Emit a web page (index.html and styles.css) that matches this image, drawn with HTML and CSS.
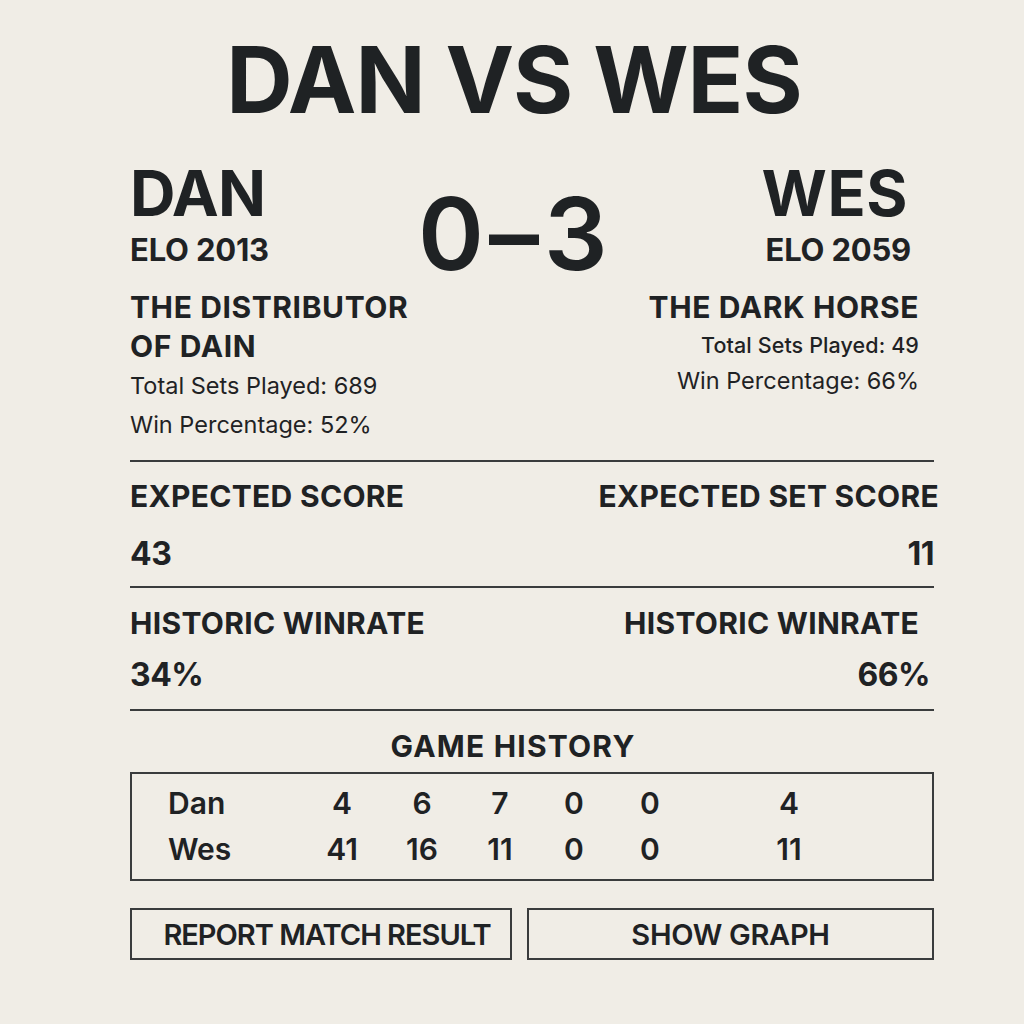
FILE: index.html
```html
<!DOCTYPE html>
<html lang="en">
<head>
<meta charset="utf-8">
<title>Dan vs Wes</title>
<link rel="stylesheet" href="styles.css">
</head>
<body>
<main class="card">
  <h1 class="title">DAN VS WES</h1>

  <section class="matchup">
    <div class="player">
      <div class="player-name">DAN</div>
      <div class="player-elo">ELO 2013</div>
    </div>
    <div class="score">0–3</div>
    <div class="player player-right">
      <div class="player-name player-name-right">WES</div>
      <div class="player-elo player-elo-right">ELO 2059</div>
    </div>
  </section>

  <section class="bios">
    <div class="bio">
      <h2 class="nickname">THE DISTRIBUTOR<br>OF DAIN</h2>
      <p class="stat">Total Sets Played: 689</p>
      <p class="stat">Win Percentage: 52%</p>
    </div>
    <div class="bio bio-right">
      <h2 class="nickname">THE DARK HORSE</h2>
      <p class="stat stat-tight stat-medium">Total Sets Played: 49</p>
      <p class="stat stat-tight">Win Percentage: 66%</p>
    </div>
  </section>

  <section class="metrics metrics-expected">
    <div class="metric">
      <div class="metric-label">EXPECTED SCORE</div>
      <div class="metric-value">43</div>
    </div>
    <div class="metric metric-right">
      <div class="metric-label label-out">EXPECTED SET SCORE</div>
      <div class="metric-value">11</div>
    </div>
  </section>

  <section class="metrics metrics-historic">
    <div class="metric">
      <div class="metric-label">HISTORIC WINRATE</div>
      <div class="metric-value">34%</div>
    </div>
    <div class="metric metric-right">
      <div class="metric-label label-in">HISTORIC WINRATE</div>
      <div class="metric-value value-in">66%</div>
    </div>
  </section>

  <section class="history">
    <h3 class="history-title">GAME HISTORY</h3>
    <div class="history-table">
      <div class="history-row">
        <span class="history-name">Dan</span>
        <span>4</span><span>6</span><span>7</span><span>0</span><span>0</span><span>4</span>
      </div>
      <div class="history-row">
        <span class="history-name">Wes</span>
        <span>41</span><span>16</span><span>11</span><span>0</span><span>0</span><span>11</span>
      </div>
    </div>
  </section>

  <div class="actions">
    <button class="action-btn action-btn-report" type="button">REPORT MATCH RESULT</button>
    <button class="action-btn" type="button">SHOW GRAPH</button>
  </div>
</main>
</body>
</html>
```

FILE: styles.css
```css
* {
  box-sizing: border-box;
}

html, body {
  margin: 0;
  padding: 0;
}

body {
  background: #f0ede6;
  color: #1f2224;
  font-family: Inter, "Noto Sans", "Liberation Sans", sans-serif;
}

.card {
  width: 804px;
  margin-left: 130px;
  padding-top: 30px;
  padding-bottom: 40px;
}

.title {
  margin: 0 36px 0 0;
  font-size: 92px;
  line-height: 100px;
  font-weight: 700;
  text-align: center;
  letter-spacing: -1px;
}

/* Matchup header */
.matchup {
  display: grid;
  grid-template-columns: 290px auto 1fr;
  align-items: start;
  margin-top: 31px;
  width: 781px;
}

.player-right {
  text-align: right;
}

.player-name {
  font-size: 63px;
  line-height: 64px;
  font-weight: 700;
  letter-spacing: -1px;
}

.player-name-right {
  margin-right: 3px;
  letter-spacing: 0.5px;
}

.player-elo {
  margin-top: 9px;
  font-size: 31px;
  line-height: 32px;
  font-weight: 700;
  letter-spacing: -0.2px;
}

.score {
  margin-top: 23px;
  margin-left: -2px;
  font-size: 100px;
  line-height: 100px;
  font-weight: 600;
  letter-spacing: 5px;
}

/* Bios */
.bios {
  display: flex;
  justify-content: space-between;
  width: 789px;
  margin-top: 4px;
}

.bio-right {
  text-align: right;
}

.nickname {
  margin: 0;
  font-size: 30px;
  line-height: 39px;
  font-weight: 700;
  letter-spacing: 0.6px;
}

.stat {
  margin: 0;
  font-size: 23.5px;
  line-height: 39px;
  font-weight: 400;
  letter-spacing: 0;
}

.stat-tight {
  line-height: 36px;
}

.stat-medium {
  font-size: 21.5px;
  font-weight: 500;
  letter-spacing: 0.1px;
}

/* Metrics */
.metrics {
  display: flex;
  justify-content: space-between;
  border-top: 2px solid #3a3c3d;
}

.metrics-expected {
  margin-top: 16px;
  padding-top: 14px;
  padding-bottom: 12px;
}

.metrics-historic {
  padding-top: 15px;
  padding-bottom: 14px;
}

.metric-right {
  text-align: right;
}

.metric-label {
  font-size: 30px;
  line-height: 40px;
  font-weight: 700;
  letter-spacing: 0.3px;
}

.metric-value {
  font-size: 32px;
  line-height: 40px;
  font-weight: 700;
  letter-spacing: -0.5px;
}

.metrics-expected .metric-value {
  margin-top: 18px;
}

.metrics-historic .metric-value {
  margin-top: 12px;
}

.label-out {
  margin-right: -5px;
}

.label-in {
  margin-right: 15px;
}

.value-in {
  margin-right: 4px;
}

/* History */
.history {
  border-top: 2px solid #3a3c3d;
  padding-top: 17px;
}

.history-title {
  margin: 0 38px 0 0;
  font-size: 30px;
  line-height: 36px;
  font-weight: 700;
  text-align: center;
  letter-spacing: 1.2px;
}

.history-table {
  margin-top: 8px;
  border: 2px solid #3a3c3d;
  padding: 6px 0 7px 36px;
}

.history-row {
  display: grid;
  grid-template-columns: 134px 80px 80px 76px 72px 80px 198px;
  font-size: 30px;
  line-height: 46px;
  font-weight: 600;
  text-align: center;
}

.history-row .history-name {
  text-align: left;
}

/* Actions */
.actions {
  display: grid;
  grid-template-columns: 382px 1fr;
  gap: 15px;
  margin-top: 27px;
}

.action-btn {
  height: 52px;
  margin: 0;
  padding: 0;
  background: transparent;
  border: 2px solid #3a3c3d;
  border-radius: 0;
  color: #1f2224;
  font-family: Inter, "Noto Sans", "Liberation Sans", sans-serif;
  font-size: 29px;
  font-weight: 600;
  letter-spacing: -0.3px;
  text-align: center;
}

.action-btn-report {
  padding-left: 12px;
  letter-spacing: -1px;
}
```
